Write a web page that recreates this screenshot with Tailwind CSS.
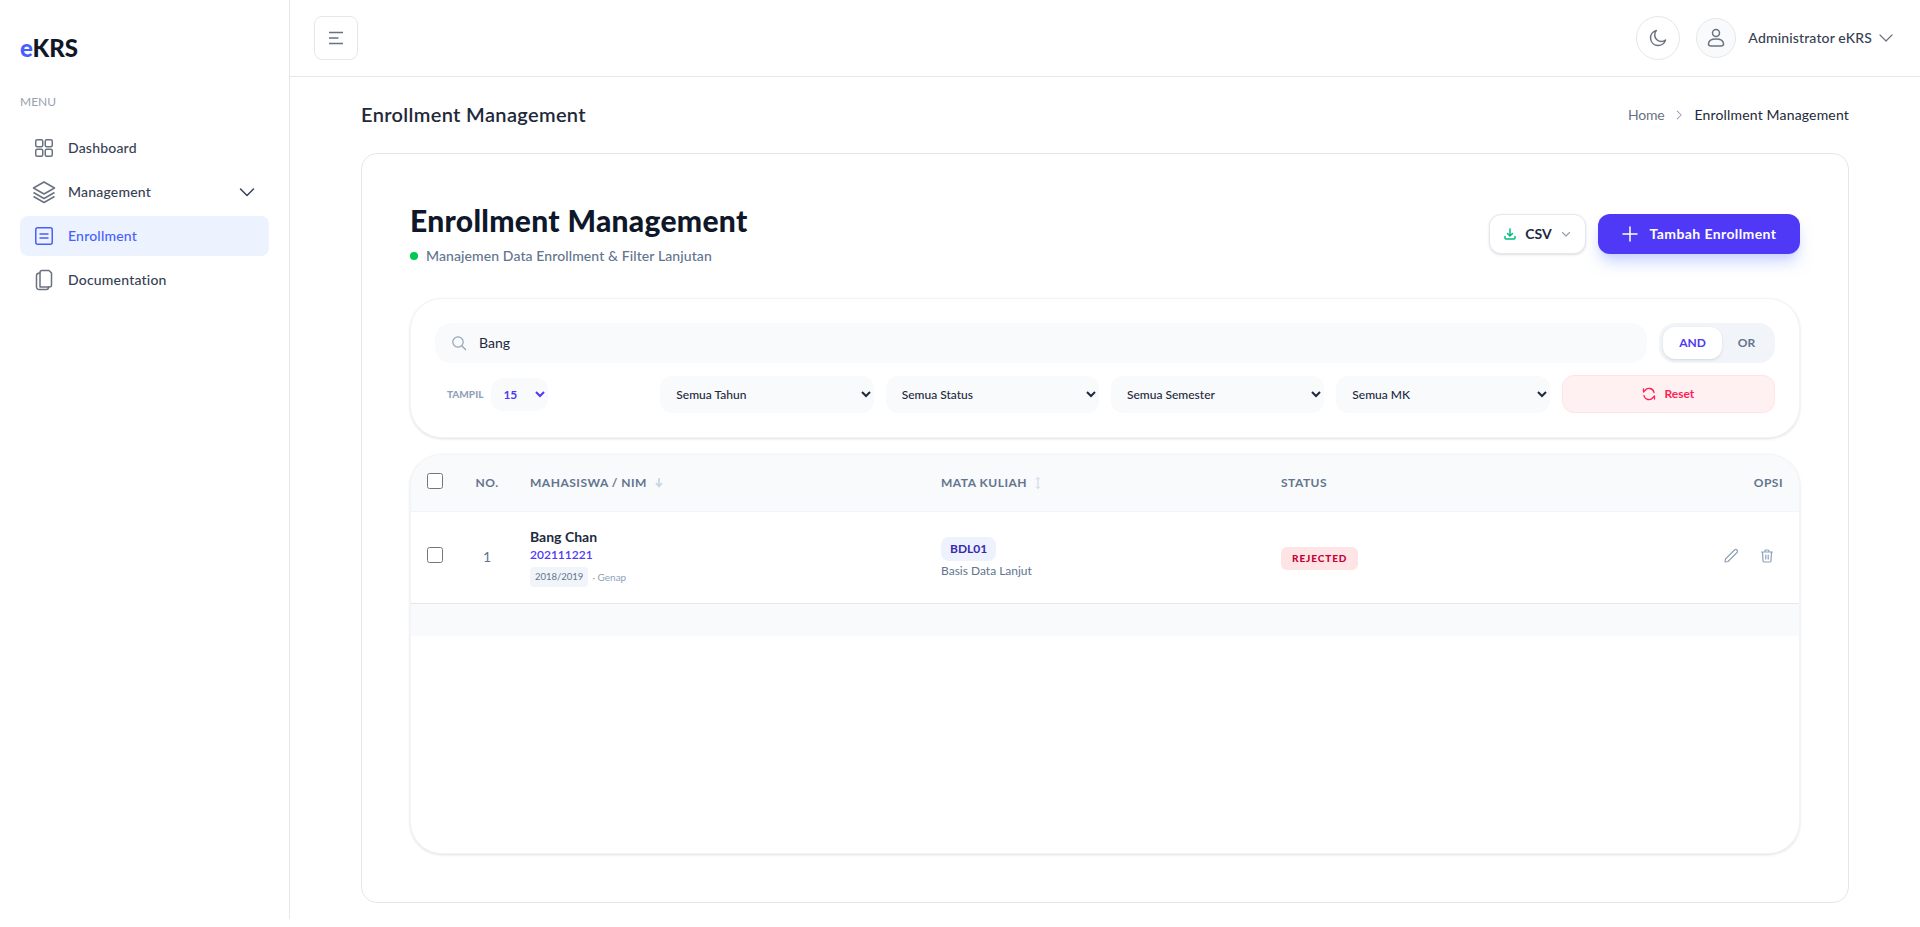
<!DOCTYPE html>
<html lang="en">
<head>
  <meta charset="UTF-8">
  <meta name="viewport" content="width=device-width, initial-scale=1.0">
  <title>Enrollment Management</title>
  <script src="https://cdn.jsdelivr.net/npm/@tailwindcss/browser@4"></script>
</head>
<body class="bg-white font-['Lato',sans-serif] text-slate-800">
  <div class="flex items-stretch">
    <!-- sidebar -->
    <aside class="w-[290px] shrink-0 border-r border-gray-200 bg-white px-5">
      <div class="mt-[32px] text-[24px] leading-8 font-black text-[#101828]"><span class="text-[#465fff]">e</span>KRS</div>
      <div class="mt-[28px] text-xs leading-5 text-gray-400">MENU</div>
      <nav class="mt-[16px] flex flex-col gap-1 text-sm font-medium tracking-[0.2px] text-gray-700">
        <a class="flex h-10 items-center gap-3 rounded-lg px-3">
          <svg class="h-6 w-6 text-gray-500" viewBox="0 0 24 24" fill="none" stroke="currentColor" stroke-width="1.5"><rect x="3.75" y="3.75" width="7" height="7" rx="1.5"/><rect x="13.25" y="3.75" width="7" height="7" rx="1.5"/><rect x="3.75" y="13.25" width="7" height="7" rx="1.5"/><rect x="13.25" y="13.25" width="7" height="7" rx="1.5"/></svg>
          Dashboard
        </a>
        <a class="flex h-10 items-center gap-3 rounded-lg px-3">
          <svg class="h-6 w-6 text-gray-500" viewBox="0 0 24 24" fill="none" stroke="currentColor" stroke-width="1.5" stroke-linejoin="round"><path d="M12 2 1.500 8 12 14 22.500 8 12 2Z"/><path d="m1.500 12.500 10.500 6 10.500-6"/><path d="m1.500 16.500 10.500 6 10.500-6"/></svg>
          Management
          <svg class="ml-auto h-5 w-5 text-gray-700" viewBox="0 0 20 20" fill="none" stroke="currentColor" stroke-width="1.5" stroke-linecap="round" stroke-linejoin="round"><path d="m3.5 7 6.5 6.5L16.500 7"/></svg>
        </a>
        <a class="flex h-10 items-center gap-3 rounded-lg bg-[#ecf3ff] px-3 text-[#465fff]">
          <svg class="h-6 w-6" viewBox="0 0 24 24" fill="none" stroke="currentColor" stroke-width="1.5"><rect x="3.75" y="3.75" width="16.500" height="16.500" rx="2"/><path d="M7.500 10h9M7.500 14h9"/></svg>
          Enrollment
        </a>
        <a class="flex h-10 items-center gap-3 rounded-lg px-3">
          <svg class="h-6 w-6 text-gray-500" viewBox="0 0 24 24" fill="none" stroke="currentColor" stroke-width="1.5" stroke-linejoin="round"><path d="M8 5V4.500a2 2 0 0 1 2-2h7l2.500 2.500v12a2 2 0 0 1-2 2H16"/><path d="M8 19V5c-2 0-3.500.8-3.500 2.500V19a2.500 2.500 0 0 0 2.500 2.500h7.500c1.500 0 2-1 2-2.500H8Z"/></svg>
          Documentation
        </a>
      </nav>
    </aside>

    <div class="min-w-0 flex-1">
      <!-- topbar -->
      <header class="flex h-[77px] items-center justify-between border-b border-gray-200 bg-white pr-[26px] pl-6">
        <button class="flex h-11 w-11 items-center justify-center rounded-lg border border-gray-200 text-gray-500">
          <svg class="h-5 w-5" viewBox="0 0 20 20" fill="none" stroke="currentColor" stroke-width="1.500"><path d="M3 4.500h14M3 10h9.500M3 15.500h14"/></svg>
        </button>
        <div class="flex items-center">
          <button class="flex h-11 w-11 items-center justify-center rounded-full border border-gray-200 text-gray-500">
            <svg class="h-5 w-5" viewBox="0 0 20 20" fill="none" stroke="currentColor" stroke-width="1.500" stroke-linejoin="round"><path d="M8.300 2.600A7.600 7.600 0 1 0 17.500 12a6.600 6.600 0 0 1-9.200-9.400Z"/></svg>
          </button>
          <div class="ml-4 flex h-10 w-10 items-center justify-center rounded-full border border-gray-200 bg-gray-50 text-gray-500">
            <svg class="h-6 w-6" viewBox="0 0 24 24" fill="none" stroke="currentColor" stroke-width="1.500"><circle cx="12" cy="7" r="3.500"/><path d="M4.500 18c0-3 3-5 7.500-5s7.500 2 7.500 5c0 1.500-1 2-2.500 2H7c-1.500 0-2.500-.5-2.500-2Z"/></svg>
          </div>
          <span class="ml-3 text-sm font-medium tracking-[0.15px] text-gray-700">Administrator eKRS</span>
          <svg class="ml-[6px] h-4 w-4 text-gray-500" viewBox="0 0 16 16" fill="none" stroke="currentColor" stroke-width="1.200" stroke-linecap="round" stroke-linejoin="round"><path d="m2 5 6 6 6-6"/></svg>
        </div>
      </header>

      <main class="px-[71px] pb-4">
        <div class="mb-[2px] flex h-[74px] items-center justify-between">
          <h2 class="text-xl font-semibold tracking-[0.35px] text-gray-800">Enrollment Management</h2>
          <div class="mt-[2px] flex items-center gap-2 text-sm">
            <span class="tracking-[-0.2px] text-gray-500">Home</span>
            <svg class="h-4 w-[14px] text-gray-400" viewBox="0 0 16 16" fill="none" stroke="currentColor" stroke-width="1.200" stroke-linecap="round" stroke-linejoin="round"><path d="m6 3.500 4.500 4.500L6 12.500"/></svg>
            <span class="tracking-[0.17px] text-gray-800">Enrollment Management</span>
          </div>
        </div>

        <section class="rounded-2xl border border-gray-200 bg-white p-12">
          <div class="flex h-[96px] items-start justify-between">
            <div>
              <h1 class="text-[30px] leading-9 font-black tracking-[0.3px] text-[#0f172a]">Enrollment Management</h1>
              <div class="mt-[8px] flex items-center gap-2 text-sm font-medium tracking-[0.1px] text-slate-500">
                <span class="h-2 w-2 rounded-full bg-[#00c950]"></span>
                Manajemen Data Enrollment &amp; Filter Lanjutan
              </div>
            </div>
            <div class="mt-[12px] flex items-center gap-3">
              <button class="flex h-10 w-[97px] items-center justify-center gap-2 rounded-xl border border-slate-200 bg-white text-sm font-bold text-slate-800 shadow-sm">
                <svg class="h-3.5 w-3.5 text-[#00bc7d]" viewBox="0 0 14 14" fill="none" stroke="currentColor" stroke-width="1.500" stroke-linecap="round" stroke-linejoin="round"><path d="M7 2v7M4.500 6.500 7 9l2.500-2.500M2 9.500V11a1 1 0 0 0 1 1h8a1 1 0 0 0 1-1V9.500"/></svg>
                CSV
                <svg class="h-3 w-3 text-slate-400" viewBox="0 0 12 12" fill="none" stroke="currentColor" stroke-width="1.100" stroke-linecap="round" stroke-linejoin="round"><path d="m2.500 4.500 3.500 3.500 3.500-3.500"/></svg>
              </button>
              <button class="flex h-10 w-[202px] items-center justify-center gap-3 rounded-xl bg-[#4f39f6] text-sm font-bold tracking-[0.4px] text-white shadow-lg shadow-indigo-200">
                <svg class="h-4 w-4" viewBox="0 0 16 16" fill="none" stroke="currentColor" stroke-width="1.500" stroke-linecap="round"><path d="M8 1v14M1 8h14"/></svg>
                Tambah Enrollment
              </button>
            </div>
          </div>

          <!-- filter -->
          <div class="rounded-[2rem] border border-slate-100 bg-white p-6 shadow-[0_1px_3px_rgba(0,0,0,0.12)]">
            <div class="flex gap-3">
              <div class="flex h-10 flex-1 items-center gap-3 rounded-2xl bg-slate-50 px-4 text-sm text-slate-800">
                <svg class="h-4 w-4 text-slate-400" viewBox="0 0 16 16" fill="none" stroke="currentColor" stroke-width="1.200" stroke-linecap="round"><circle cx="7" cy="7" r="5.200"/><path d="m11 11 3.500 3.500"/></svg>
                Bang
              </div>
              <div class="flex h-10 w-[116px] items-center rounded-2xl bg-slate-100 p-1 text-xs font-bold">
                <span class="flex h-8 w-[59px] items-center justify-center rounded-xl bg-white text-[#4f39f6] shadow-sm">AND</span>
                <span class="flex-1 text-center text-slate-500">OR</span>
              </div>
            </div>
            <div class="mt-3 grid grid-cols-6 items-center gap-3">
              <div class="flex items-center gap-2 pl-3">
                <span class="text-[10px] font-black text-slate-400">TAMPIL</span>
                <select class="h-[33px] w-[57px] rounded-xl bg-slate-50 pl-2 text-xs font-bold text-[#4f39f6]"><option>15</option></select>
              </div>
              <select class="h-[37px] rounded-xl bg-slate-50 pl-3 text-xs font-medium text-slate-800"><option>Semua Tahun</option></select>
              <select class="h-[37px] rounded-xl bg-slate-50 pl-3 text-xs font-medium text-slate-800"><option>Semua Status</option></select>
              <select class="h-[37px] rounded-xl bg-slate-50 pl-3 text-xs font-medium text-slate-800"><option>Semua Semester</option></select>
              <select class="h-[37px] rounded-xl bg-slate-50 pl-3 text-xs font-medium text-slate-800"><option>Semua MK</option></select>
              <button class="flex h-[38px] items-center justify-center gap-2 rounded-xl border border-rose-100 bg-rose-50 text-xs font-bold text-[#ff2056]">
                <svg class="h-3.5 w-3.5" viewBox="0 0 14 14" fill="none" stroke="currentColor" stroke-width="1.300" stroke-linecap="round" stroke-linejoin="round"><path d="M12 5.500A5 5 0 0 0 3 3.500L1.500 5V2M2 8.500a5 5 0 0 0 9 2L12.500 9v3"/></svg>
                Reset
              </button>
            </div>
          </div>

          <!-- table -->
          <div class="mt-4 h-[400px] overflow-hidden rounded-[2rem] border border-slate-100 bg-white shadow-[0_1px_3px_rgba(0,0,0,0.12)]">
            <table class="w-full table-fixed border-collapse">
              <thead>
                <tr class="h-[56px] border-b border-slate-100 bg-slate-50 text-left text-xs font-bold tracking-[0.5px] text-slate-500">
                  <th class="w-[48px] pl-4"><input type="checkbox" class="-mt-[3px] block h-4 w-4"></th>
                  <th class="w-[56px] text-center">NO.</th>
                  <th class="w-[411px] pl-[15px]">
                    <span class="inline-flex items-center gap-2">MAHASISWA / NIM
                      <svg class="h-2.5 w-2 text-slate-300" viewBox="0 0 8 10" fill="none" stroke="currentColor" stroke-width="1.800" stroke-linejoin="round"><path d="M4 0v8M1 5l3 3.500L7 5"/></svg>
                    </span>
                  </th>
                  <th class="w-[339px] pl-[15px]">
                    <span class="inline-flex items-center gap-[8px]">MATA KULIAH
                      <svg class="h-3 w-[6px] text-slate-300" viewBox="0 0 6 12" fill="none" stroke="currentColor" stroke-width="1"><path d="M3 .500v11M1 2.500 3 .500l2 2M1 9.500l2 2 2-2"/></svg>
                    </span>
                  </th>
                  <th class="w-[335px] pl-4">STATUS</th>
                  <th class="pr-[16px] text-right">OPSI</th>
                </tr>
              </thead>
              <tbody>
                <tr class="h-[92px] border-b border-gray-200">
                  <td class="pl-4"><input type="checkbox" class="-mt-[5px] block h-4 w-4"></td>
                  <td class="text-center text-sm text-slate-500">1</td>
                  <td class="pl-[15px]">
                    <div class="text-sm leading-5 font-bold text-slate-800">Bang Chan</div>
                    <div class="text-xs leading-4 font-semibold text-[#4f39f6]">202111221</div>
                    <div class="mt-1 flex items-center gap-1 text-[10px] text-slate-400">
                      <span class="rounded bg-slate-100 px-[5px] py-[3px] text-[9.5px] text-slate-500">2018/2019</span> · Genap
                    </div>
                  </td>
                  <td class="pl-[15px]">
                    <span class="inline-block rounded-lg bg-indigo-50 px-[9px] py-[4px] text-xs leading-4 font-bold text-[#372aac]">BDL01</span>
                    <div class="mt-[2px] text-xs leading-4 text-slate-500">Basis Data Lanjut</div>
                  </td>
                  <td class="pl-4">
                    <span class="inline-block rounded-md bg-rose-100 px-[11px] py-[4px] text-[10px] font-black tracking-[0.9px] text-[#c70036]">REJECTED</span>
                  </td>
                  <td class="pr-[24px]">
                    <div class="-mt-[2px] flex justify-end gap-[20px] text-slate-400">
                      <svg class="h-4 w-4" viewBox="0 0 16 16" fill="none" stroke="currentColor" stroke-width="1.200" stroke-linejoin="round"><path d="M11.500 2a1.500 1.500 0 0 1 2.500 2.500L5 13.500 2 14l.5-3L11.500 2Z"/></svg>
                      <svg class="h-4 w-4" viewBox="0 0 16 16" fill="none" stroke="currentColor" stroke-width="1.200" stroke-linecap="round" stroke-linejoin="round"><path d="M2.500 4h11M6 4V3a1 1 0 0 1 1-1h2a1 1 0 0 1 1 1v1M3.500 4l.5 8.500a1.500 1.500 0 0 0 1.500 1.500h5a1.500 1.500 0 0 0 1.500-1.500l.5-8.500M6.800 7v4M9.200 7v4"/></svg>
                    </div>
                  </td>
                </tr>
                <tr class="h-[33px] bg-slate-50"><td colspan="6"></td></tr>
              </tbody>
            </table>
          </div>
        </section>
      </main>
    </div>
  </div>
</body>
</html>
